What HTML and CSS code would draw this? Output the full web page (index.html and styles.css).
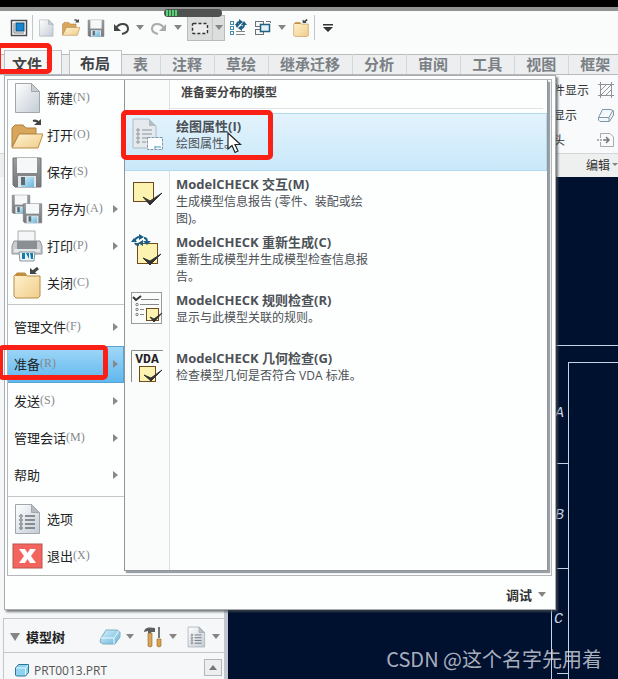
FILE: index.html
```html
<!DOCTYPE html>
<html lang="zh-CN">
<head>
    <meta charset="UTF-8">
    <meta name="viewport" content="width=device-width, initial-scale=1.0">
    <title>PRT0013</title>
    <link rel="stylesheet" href="styles.css">
</head>
<body>
    <!-- shared icons -->
    <svg class="defs" width="0" height="0">
        <defs>
            <linearGradient id="paper" x1="0" y1="0" x2="1" y2="1">
                <stop offset="0" stop-color="#ffffff"/>
                <stop offset="1" stop-color="#c3ccd5"/>
            </linearGradient>
            <linearGradient id="gold" x1="0" y1="0" x2="1" y2="1">
                <stop offset="0" stop-color="#fff3cf"/>
                <stop offset="1" stop-color="#f0cd8c"/>
            </linearGradient>
            <linearGradient id="steel" x1="0" y1="0" x2="0" y2="1">
                <stop offset="0" stop-color="#9a9da0"/>
                <stop offset="1" stop-color="#74787b"/>
            </linearGradient>
            <linearGradient id="blue" x1="0" y1="0" x2="1" y2="1">
                <stop offset="0" stop-color="#d5f1fb"/>
                <stop offset="1" stop-color="#69b6dc"/>
            </linearGradient>
        </defs>
        <symbol id="i-new" viewBox="0 0 32 32">
            <path d="M4.500 1.500H20.500L28.500 9.500V30.500H4.500Z" fill="url(#paper)" stroke="#a1a7ad"/>
            <path d="M20.500 1.500V9.500H28.500Z" fill="#c9ced2" stroke="#a1a7ad"/>
        </symbol>
        <symbol id="i-open" viewBox="0 0 32 32">
            <path d="M1 28V9L4 6H12L15 9H25V15H8Z" fill="#d9a75b" stroke="#ad7f3d"/>
            <path d="M1 29L8 15H32L27 29Z" fill="url(#gold)" stroke="#b78b45"/>
            <path d="M22 2C25 1 27 2 28 5" fill="none" stroke="#444" stroke-width="2"/>
            <path d="M23 6H30V0Z" fill="#444"/>
        </symbol>
        <symbol id="i-save" viewBox="0 0 32 32">
            <path d="M2 2H30V31H4L2 29Z" fill="url(#steel)" stroke="#6f7376"/>
            <rect x="6" y="2" width="20" height="15" fill="#f5f7f8"/>
            <rect x="7" y="20" width="18" height="11" fill="#e2e6ea"/>
            <rect x="10" y="21" width="13" height="10" fill="url(#blue)"/>
            <rect x="10" y="21" width="4" height="8" fill="#5d6a74"/>
        </symbol>
        <symbol id="i-save-as" viewBox="0 0 32 32">
            <use href="#i-save" x="0" y="0" width="20" height="22"/>
            <use href="#i-save" x="11" y="9" width="21" height="22"/>
        </symbol>
        <symbol id="i-print" viewBox="0 0 32 32">
            <path d="M7 1H24V13H7Z" fill="#f4f6f7" stroke="#a9adb0"/>
            <path d="M3 11H29L31 16V24H1V16Z" fill="#c9cdd0" stroke="#8e9396"/>
            <rect x="6" y="11" width="20" height="8" fill="#8a8f93"/>
            <rect x="3" y="19" width="26" height="3" fill="#e5e8ea"/>
            <path d="M8 22H24L23 31H9Z" fill="#e8f6fb" stroke="#8e9396"/>
            <path d="M11 23H14V29H11ZM15 23L18 29V23ZM19 23H22V29H20Z" fill="#167bab"/>
        </symbol>
        <symbol id="i-close" viewBox="0 0 32 32">
            <path d="M3 29V9L6 6H14L16 9H29V29L27 31H5Z" fill="url(#gold)" stroke="#b78b45"/>
            <path d="M4 9L6 6H14L16 9Z" fill="#c18d40"/>
            <path d="M27 1L22 5" fill="none" stroke="#444" stroke-width="3"/>
            <path d="M19 1V7H26Z" fill="#444"/>
        </symbol>
        <symbol id="i-list" viewBox="0 0 32 32">
            <path d="M4.500 1.500H20.500L28.500 9.500V30.500H4.500Z" fill="url(#paper)" stroke="#a1a7ad"/>
            <path d="M20.500 1.500V9.500H28.500Z" fill="#b5bbc0" stroke="#a1a7ad"/>
            <path d="M14 13H24M14 17H24M14 21H24M14 25H24" stroke="#6b7075" stroke-width="1.300"/>
            <g fill="none" stroke="#6b7075">
                <circle cx="10" cy="13" r="1.300"/><circle cx="10" cy="17" r="1.300"/><circle cx="10" cy="21" r="1.300"/><circle cx="10" cy="25" r="1.300"/>
            </g>
        </symbol>
        <symbol id="i-exit" viewBox="0 0 32 32">
            <rect x="2" y="4" width="29" height="24" fill="#f4645f" stroke="#bb524d"/>
            <path d="M8 9H14L16.500 13L19 9H25L20 16L25 23H19L16.500 19L14 23H8L13 16Z" fill="#fff"/>
        </symbol>
        <symbol id="i-props" viewBox="0 0 32 32">
            <path d="M2 1H18L25 8V30H2Z" fill="#e4eaee" stroke="#b3bbc1"/>
            <path d="M18 1V8H25Z" fill="#b5bdc3"/>
            <path d="M11 12H21M11 16H21M11 20H16M11 24H15" stroke="#8b9196" stroke-width="1.200"/>
            <g fill="none" stroke="#8b9196"><circle cx="7" cy="12" r="1.200"/><circle cx="7" cy="16" r="1.200"/><circle cx="7" cy="20" r="1.200"/><circle cx="7" cy="24" r="1.200"/></g>
            <rect x="16.500" y="19.500" width="15" height="12" fill="#fbfdfe" stroke="#7d98a8" stroke-dasharray="3 1"/>
            <path d="M24 28V31M24 29H30" stroke="#4c9cc2"/>
        </symbol>
        <symbol id="i-check" viewBox="0 0 32 32">
            <rect x="2.500" y="6.500" width="20" height="19" fill="#fdf3b0" stroke="#6e4a1c"/>
            <path d="M12 21L19 25L31 17L19 29Z" fill="#333" stroke="#333"/>
        </symbol>
        <symbol id="i-recheck" viewBox="0 0 32 32">
            <rect x="6.500" y="9.500" width="20" height="20" fill="#fdf3b0" stroke="#6e4a1c"/>
            <path d="M12 24L19 27L30 20L19 31Z" fill="#333" stroke="#333"/>
            <path d="M3 8C4 4 6 3 9 3M8 11C7 11 5 11 4 9M13 4C15 4 16 5 16 8" fill="none" stroke="#1b5e86" stroke-width="2"/>
            <path d="M8 0L13 3L8 6ZM0 8H6L3 4ZM12 6V12L7 9ZM12 7H20L16 11Z" fill="#1b5e86"/>
        </symbol>
        <symbol id="i-rules" viewBox="0 0 32 32">
            <rect x="0.500" y="0.500" width="30" height="31" fill="#fafbfb" stroke="#9a9a9a"/>
            <path d="M2 5L5 8L10 4" fill="none" stroke="#333" stroke-width="2"/>
            <path d="M10 7.500H28M9 12.500H28M9 17.500H13M9 22.500H13" stroke="#888"/>
            <g fill="none" stroke="#777"><circle cx="6" cy="12.500" r="1.200"/><circle cx="6" cy="17.500" r="1.200"/><circle cx="6" cy="22.500" r="1.200"/></g>
            <rect x="15.500" y="16.500" width="12" height="12" fill="#fdf3b0" stroke="#6e4a1c"/>
            <path d="M19 25L23 27L31 21L23 30Z" fill="#333" stroke="#333"/>
        </symbol>
    </svg>

    <div class="app">
        <div class="titlebar"></div>

        <div class="toolbar">
            <button class="tool" aria-label="窗口">
                <svg width="18" height="18" viewBox="0 0 18 18"><rect x="1.500" y="1.500" width="15" height="15" fill="#fff" stroke="#454b50" stroke-width="1.500"/><path d="M4 4V14H14" fill="none" stroke="#777"/><rect x="6" y="4" width="8" height="8" fill="#1387cf" stroke="#134e78"/></svg>
            </button>
            <span class="tool-divider"></span>
            <button class="tool" aria-label="新建"><svg width="18" height="18"><use href="#i-new"/></svg></button>
            <button class="tool" aria-label="打开"><svg width="18" height="18"><use href="#i-open"/></svg></button>
            <button class="tool" aria-label="保存"><svg width="18" height="18"><use href="#i-save"/></svg></button>
            <button class="tool" aria-label="撤消">
                <svg width="18" height="18" viewBox="0 0 18 18"><path d="M4 9C8 3 16 4 16 10C16 12 14 14 10 15" fill="none" stroke="#444" stroke-width="2"/><path d="M2 5V12H9Z" fill="#444"/></svg>
            </button>
            <button class="tool-arrow" aria-label="撤消列表"><i class="caret"></i></button>
            <button class="tool" aria-label="重做">
                <svg width="18" height="18" viewBox="0 0 18 18"><path d="M14 9C10 3 2 4 2 10C2 12 4 14 8 15" fill="none" stroke="#aaa" stroke-width="2"/><path d="M16 5V12H9Z" fill="#aaa"/></svg>
            </button>
            <button class="tool-arrow" aria-label="重做列表"><i class="caret"></i></button>
            <div class="tool-split">
                <button class="tool" aria-label="选择">
                    <svg width="18" height="18" viewBox="0 0 18 18"><rect x="1.500" y="4.500" width="15" height="10" rx="1" fill="#ececec" stroke="#333" stroke-width="1.400" stroke-dasharray="3 2"/></svg>
                </button>
                <button class="tool-arrow" aria-label="选择列表"><i class="caret"></i></button>
            </div>
            <button class="tool" aria-label="重新生成">
                <svg width="18" height="18" viewBox="0 0 18 18"><g fill="none" stroke="#4c88a8"><rect x="1.500" y="2.500" width="3" height="3"/><rect x="1.500" y="7.500" width="3" height="3"/><rect x="1.500" y="12.500" width="3" height="3"/></g><path d="M7 12.500H16M7 15.500H16" stroke="#888"/><path d="M8 6C8 3 10 3 11 3M15 5C15 9 13 9 12 9" fill="none" stroke="#1b5e86" stroke-width="2"/><path d="M10 0L14 3L10 6ZM6 5H11L8 9ZM13 6V12L9 9ZM12 6L15 2L18 6Z" fill="#1b5e86"/></svg>
            </button>
            <button class="tool" aria-label="窗口列表">
                <svg width="18" height="18" viewBox="0 0 18 18"><g fill="#f6f8f9" stroke="#6c7378"><rect x="1.500" y="2.500" width="8" height="5"/><rect x="1.500" y="10.500" width="8" height="5"/></g><rect x="6.500" y="5.500" width="9" height="7" fill="#dff1f9" stroke="#245f80" stroke-width="1.500"/><path d="M12 2.500H16.500V4" fill="none" stroke="#6c7378"/></svg>
            </button>
            <button class="tool-arrow" aria-label="更多窗口"><i class="caret"></i></button>
            <button class="tool" aria-label="关闭"><svg width="18" height="18"><use href="#i-close"/></svg></button>
            <span class="tool-divider"></span>
            <button class="tool" aria-label="自定义">
                <svg width="10" height="8" viewBox="0 0 10 8"><path d="M0 0H10V1.500H0ZM0 3H10L5 8Z" fill="#333"/></svg>
            </button>
        </div>

        <nav class="tabs">
            <button class="tab-file">文件<i class="caret small"></i></button>
            <button class="tab active">布局</button>
            <button class="tab">表</button>
            <button class="tab">注释</button>
            <button class="tab">草绘</button>
            <button class="tab">继承迁移</button>
            <button class="tab">分析</button>
            <button class="tab">审阅</button>
            <button class="tab">工具</button>
            <button class="tab">视图</button>
            <button class="tab">框架</button>
        </nav>

        <section class="ribbon">
            <div class="ribbon-body">
                <div class="ribbon-row"><span>件显示</span>
                    <svg width="18" height="18" viewBox="0 0 18 18"><path d="M3.500 1V17M14.500 1V17M1 3.500H17M1 14.500H17M4 9L9 4M4 14L14 4M9 14L14 9" fill="none" stroke="#8f9498"/></svg>
                </div>
                <div class="ribbon-row"><span>显示</span>
                    <svg width="18" height="18" viewBox="0 0 18 18"><path d="M1.500 11.500L5.500 3.500H14L16.500 5V9L12.500 15.500H3L1.500 14ZM1.500 11.500H12L16 4M12 11.500V15" fill="#f0f6f9" stroke="#7f97a6"/></svg>
                </div>
                <div class="ribbon-row"><span>头</span>
                    <svg width="18" height="18" viewBox="0 0 18 18"><path d="M3.500 7V2.500H13L16.500 6V15.500H3.500V11" fill="none" stroke="#aaa"/><path d="M0 9H8" stroke="#666" stroke-dasharray="2 1"/><path d="M7 9H12M9 6L12 9L9 12" fill="none" stroke="#777" stroke-width="1.500"/></svg>
                </div>
            </div>
            <div class="ribbon-label">编辑<i class="caret small"></i></div>
        </section>

        <main class="workspace">
            <aside class="model-tree">
                <header class="tree-header">
                    <i class="caret big"></i>
                    <h2>模型树</h2>
                    <div class="tree-tools">
                        <button aria-label="显示">
                            <svg width="22" height="20" viewBox="0 0 22 20"><path d="M2 11L7 3H18L21 5V10L16 17H4L1 15Z" fill="url(#blue)" stroke="#7faec4"/><path d="M2 11H15L20 4M15 11V17" fill="none" stroke="#eefaff"/></svg>
                            <i class="caret"></i>
                        </button>
                        <button aria-label="设置">
                            <svg width="22" height="22" viewBox="0 0 22 22"><path d="M2 6C3 1 7 1 13 2V6H9V8H6V5Z" fill="#5b5f62"/><path d="M6 7H10V20Q8 22 6 20Z" fill="#d9a558" stroke="#8d6228" stroke-width="0.600"/><path d="M17 1V12" stroke="#777" stroke-width="2"/><path d="M15 13H19V20Q17 22 15 20Z" fill="#dda348" stroke="#8d6228" stroke-width="0.600"/></svg>
                            <i class="caret"></i>
                        </button>
                        <button aria-label="列表">
                            <svg width="22" height="22"><use href="#i-list"/></svg>
                            <i class="caret"></i>
                        </button>
                    </div>
                </header>
                <div class="tree-list">
                    <svg width="16" height="16" viewBox="0 0 16 16"><path d="M1.500 6L4.500 2.500H14.500V10.500L11.500 14H2.500L1.500 13Z" fill="#8fd3f0" stroke="#2b7598"/><path d="M2 6H11.500V13M11.500 6L14 3" fill="none" stroke="#dff5ff"/></svg>
                    <span>PRT0013.PRT</span>
                    <button class="scroll-up" aria-label="向上"><i class="caret up"></i></button>
                </div>
            </aside>

            <section class="canvas">
                <svg class="sheet" width="100%" height="100%">
                    <g stroke="#c5d3e6" fill="none">
                        <line x1="324" y1="168.500" x2="100%" y2="168.500"/>
                        <line x1="323.500" y1="168" x2="323.500" y2="100%"/>
                        <line x1="340" y1="185.500" x2="100%" y2="185.500"/>
                        <line x1="340.500" y1="185" x2="340.500" y2="100%"/>
                        <line x1="329" y1="286.500" x2="340" y2="286.500"/>
                        <line x1="329" y1="391.500" x2="340" y2="391.500"/>
                        <line x1="329" y1="496.500" x2="340" y2="496.500"/>
                    </g>
                    <g class="zone">
                        <text x="327" y="240">A</text>
                        <text x="327" y="342">B</text>
                        <text x="326" y="446">C</text>
                    </g>
                </svg>
            </section>
        </main>
    </div>

    <div class="progress"><i></i></div>

    <div class="file-menu">
        <div class="menu-body">
            <div class="menu-list">
                <button class="menu-item"><svg width="32" height="32"><use href="#i-new"/></svg>新建<kbd>(N)</kbd></button>
                <button class="menu-item"><svg width="32" height="32"><use href="#i-open"/></svg>打开<kbd>(O)</kbd></button>
                <button class="menu-item"><svg width="32" height="32"><use href="#i-save"/></svg>保存<kbd>(S)</kbd></button>
                <button class="menu-item more"><svg width="32" height="32"><use href="#i-save-as"/></svg>另存为<kbd>(A)</kbd></button>
                <button class="menu-item more"><svg width="32" height="32"><use href="#i-print"/></svg>打印<kbd>(P)</kbd></button>
                <button class="menu-item"><svg width="32" height="32"><use href="#i-close"/></svg>关闭<kbd>(C)</kbd></button>
                <hr>
                <button class="menu-item plain more">管理文件<kbd>(F)</kbd></button>
                <button class="menu-item plain more selected">准备<kbd>(R)</kbd></button>
                <button class="menu-item plain more">发送<kbd>(S)</kbd></button>
                <button class="menu-item plain more">管理会话<kbd>(M)</kbd></button>
                <button class="menu-item plain more">帮助</button>
                <hr>
                <button class="menu-item"><svg width="32" height="32"><use href="#i-list"/></svg>选项</button>
                <button class="menu-item"><svg width="32" height="32"><use href="#i-exit"/></svg>退出<kbd>(X)</kbd></button>
            </div>

            <div class="submenu">
                <h3>准备要分布的模型</h3>
                <button class="entry hover">
                    <svg width="32" height="32"><use href="#i-props"/></svg>
                    <span class="entry-text"><b>绘图属性(I)</b><span>绘图属性。</span></span>
                </button>
                <button class="entry">
                    <svg width="32" height="32"><use href="#i-check"/></svg>
                    <span class="entry-text"><b>ModelCHECK 交互(M)</b><span>生成模型信息报告 (零件、装配或绘图)。</span></span>
                </button>
                <button class="entry">
                    <svg width="32" height="32"><use href="#i-recheck"/></svg>
                    <span class="entry-text"><b>ModelCHECK 重新生成(C)</b><span>重新生成模型并生成模型检查信息报告。</span></span>
                </button>
                <button class="entry">
                    <svg width="32" height="32"><use href="#i-rules"/></svg>
                    <span class="entry-text"><b>ModelCHECK 规则检查(R)</b><span>显示与此模型关联的规则。</span></span>
                </button>
                <button class="entry">
                    <svg width="32" height="32" viewBox="0 0 32 32">
                        <path d="M0.500 32V0.500H32" fill="none" stroke="#8b8b8b"/>
                        <text x="16" y="13" text-anchor="middle" class="vda-text">VDA</text>
                        <rect x="8.500" y="16.500" width="16" height="15" fill="#fdf3b0" stroke="#6e4a1c"/>
                        <path d="M13 25L20 28L31 20L20 31Z" fill="#333" stroke="#333"/>
                    </svg>
                    <span class="entry-text"><b>ModelCHECK 几何检查(G)</b><span>检查模型几何是否符合 VDA 标准。</span></span>
                </button>
            </div>
        </div>
        <div class="menu-footer">
            <button>调试<i class="caret"></i></button>
        </div>
    </div>

    <div class="mark mark-file"></div>
    <div class="mark mark-entry"></div>
    <div class="mark mark-prepare"></div>
    <svg class="cursor" width="15" height="22" viewBox="0 0 15 22"><path d="M1 1V17L5 13.500L8 20.500L11 19L8 12.500H13.500Z" fill="#fff" stroke="#222" stroke-width="1.200"/></svg>
    <div class="watermark">CSDN @这个名字先用着</div>
</body>
</html>
```

FILE: styles.css
```css
* {
    box-sizing: border-box;
}

body {
    margin: 0;
    position: relative;
    height: 100vh;
    overflow: hidden;
    font-family: "Open Sans", "Noto Sans CJK SC", sans-serif;
    font-size: 12px;
    color: #333;
    background: #fafcfc;
}

button {
    margin: 0;
    padding: 0;
    border: none;
    background: none;
    font: inherit;
    color: inherit;
    text-align: left;
}

svg {
    display: block;
    flex-shrink: 0;
}

.defs {
    position: absolute;
}

.app {
    display: flex;
    flex-direction: column;
    height: 100%;
}

.caret {
    border: 4px solid transparent;
    border-top: 5px solid #858585;
    border-bottom: 0;
}

.caret.small {
    border-width: 3px 3px 0;
}

.caret.big {
    border-width: 8px 5px 0;
}

.caret.up {
    border-width: 0 4px 5px;
    border-bottom: 5px solid #777;
}

.titlebar {
    flex-shrink: 0;
    height: 11px;
    background: #000;
    border-bottom: 4px solid #929292;
}

/* quick access toolbar */

.toolbar {
    display: flex;
    flex-shrink: 0;
    align-items: center;
    gap: 1px;
    height: 39px;
    padding: 0 7px 6px;
}

.tool,
.tool-arrow {
    display: flex;
    align-items: center;
    justify-content: center;
    width: 24px;
    height: 24px;
}

.tool-arrow {
    width: 12px;
}

.tool-divider {
    width: 1px;
    height: 25px;
    background: #c4c7c8;
}

.tool-split {
    display: flex;
    margin-left: 2px;
    background: #dcdddd;
    border: 1px solid #b9bbbc;
}

.tool-split .tool-arrow {
    border-left: 1px solid #c2c4c5;
}

.progress {
    position: absolute;
    top: 9px;
    left: 164px;
    width: 58px;
    height: 8px;
    padding: 1px 2px;
    border-radius: 4px;
    background: #505252;
}

.progress i {
    display: block;
    width: 12px;
    height: 6px;
    background: repeating-linear-gradient(90deg, #5fce7a 0, #5fce7a 2px, #2f6b3e 2px, #2f6b3e 3px);
}

/* ribbon tabs */

.tabs {
    display: flex;
    flex-shrink: 0;
    align-items: flex-end;
    height: 25px;
    padding-left: 4px;
    border-bottom: 1px solid #b6b9bb;
    background: linear-gradient(#fafcfc 4px, #b9bcbe 4px, #b9bcbe 5px, #eceeef 5px);
}

.tab,
.tab-file {
    flex-shrink: 0;
    height: 20px;
    padding: 0 12px 0 11px;
    border-right: 1px solid #d5d7d8;
    font-size: 15px;
    line-height: 20px;
    font-weight: bold;
    color: #7a8085;
}

.tab-file {
    display: flex;
    align-items: center;
    gap: 4px;
    height: 24px;
    margin-right: 7px;
    padding: 2px 9px 0 7px;
    border: 1px solid #c0c3c5;
    border-bottom: none;
    color: #444;
    background: #f6f8f8;
}

.tab.active {
    height: 24px;
    padding: 0 11px 0 10px;
    line-height: 24px;
    border: 1px solid #c0c3c5;
    border-bottom: none;
    color: #3f4347;
    background: #fafcfc;
}

/* ribbon group */

.ribbon {
    flex-shrink: 0;
    background: #f8fafb;
}

.ribbon-body {
    display: flex;
    flex-direction: column;
    align-items: flex-end;
    height: 78px;
    padding: 2px 3px 0 0;
}

.ribbon-row {
    display: flex;
    align-items: center;
    gap: 8px;
    height: 25px;
}

.ribbon-row span {
    width: 36px;
}

.ribbon-label {
    display: flex;
    align-items: center;
    justify-content: flex-end;
    gap: 2px;
    height: 24px;
    padding-bottom: 2px;
    border-top: 1px solid #d3d5d6;
    background: #eeefef;
}

/* model tree and drawing area */

.workspace {
    display: flex;
    flex: 1;
    min-height: 0;
}

.model-tree {
    display: flex;
    flex-direction: column;
    justify-content: flex-end;
    width: 228px;
    padding-left: 3px;
    border-right: 4px solid #c3c8d0;
    background: #f5f7f8;
}

.tree-header {
    display: flex;
    align-items: center;
    height: 35px;
    padding: 2px 4px 0 6px;
    border: 1px solid #c4c7c9;
    border-right: none;
}

.tree-header h2 {
    margin: 0 auto 0 6px;
    font-size: 13px;
    color: #222;
}

.tree-tools {
    display: flex;
    gap: 8px;
}

.tree-tools button {
    display: flex;
    align-items: center;
    gap: 5px;
}

.tree-list {
    display: flex;
    align-items: flex-start;
    gap: 4px;
    height: 26px;
    padding: 9px 2px 0 10px;
    border-left: 1px solid #c4c7c9;
    line-height: 18px;
    color: #555;
}

.scroll-up {
    display: flex;
    align-items: center;
    justify-content: center;
    width: 18px;
    height: 17px;
    margin: -3px 0 0 auto;
    border: 1px solid #b4b7b9;
    background: #eceeef;
}

.canvas {
    flex: 1;
    min-width: 0;
    overflow: hidden;
    background: #00102f;
}

.zone {
    font: italic 15px "Liberation Mono", monospace;
    fill: #c5d3e6;
}

/* file menu */

.file-menu {
    position: absolute;
    top: 75px;
    left: 4px;
    right: 62px;
    padding: 3px 3px 0 2px;
    border: 1px solid #a9adb0;
    background: #fdfefe;
    box-shadow: 2px 2px 2px rgba(70, 75, 80, 0.7);
}

.menu-body {
    display: grid;
    grid-template-columns: 116px 1fr;
    border: 1px solid #b4b7ba;
}

.menu-list {
    display: flex;
    flex-direction: column;
}

.menu-list hr {
    width: 100%;
    margin: 2px 0 4px;
    border: none;
    border-top: 1px solid #c4c7c9;
}

.menu-item {
    display: flex;
    align-items: center;
    height: 37px;
    padding: 0 6px 2px 3px;
    font-size: 13px;
    color: #222;
}

.menu-item svg {
    margin-right: 4px;
}

.menu-item kbd {
    font: 12px "Liberation Serif", serif;
    color: #85898d;
}

.menu-item.plain {
    padding-left: 6px;
}

.menu-item.more::after {
    content: "";
    margin-left: auto;
    border: 4px solid transparent;
    border-left: 5px solid #85898c;
    border-right: 0;
}

.menu-item.selected {
    background: linear-gradient(#a0d7f8, #5fb8ee);
    border: 1px solid #58a5d3;
    border-left: none;
    padding-right: 5px;
}

.submenu {
    margin: 0 3px 4px 0;
    border: 1px solid #8f969a;
    border-top: none;
    background: linear-gradient(90deg, #fafcfc 44px, #dcdfe1 44px, #dcdfe1 45px, #fdfefe 45px);
    box-shadow: 2px 2px 1px #9aa1a5;
}

.submenu h3 {
    height: 29px;
    margin: 0 4px 4px 45px;
    padding-left: 11px;
    border-bottom: 1px solid #e0e2e3;
    font-size: 12px;
    line-height: 25px;
    color: #444;
}

.entry {
    display: flex;
    align-items: flex-start;
    width: 100%;
    height: 58px;
    padding: 5px 0 0 6px;
    line-height: 17px;
    color: #4c5156;
}

.entry b {
    font-size: 13px;
}

.entry.hover {
    background: linear-gradient(#e3f3fc, #c9e8fa);
    border: 1px solid #b3daee;
    border-left: none;
    padding-top: 4px;
}

.entry-text {
    display: flex;
    flex-direction: column;
    width: 200px;
    margin-left: 13px;
}

.vda-text {
    font: bold 13px "Liberation Mono", monospace;
    fill: #222;
}

.menu-footer {
    display: flex;
    align-items: center;
    justify-content: flex-end;
    height: 33px;
    padding: 4px 6px 0 0;
}

.menu-footer button {
    display: flex;
    align-items: center;
    gap: 6px;
    font-size: 13px;
    font-weight: bold;
}

/* annotations */

.mark {
    position: absolute;
    border: 5px solid #fb2016;
    border-radius: 5px;
}

.mark-file {
    top: 43px;
    left: -4px;
    width: 56px;
    height: 31px;
}

.mark-entry {
    top: 110px;
    left: 121px;
    width: 152px;
    height: 50px;
}

.mark-prepare {
    top: 345px;
    left: -2px;
    width: 110px;
    height: 35px;
}

.cursor {
    position: absolute;
    top: 132px;
    left: 227px;
}

.watermark {
    position: absolute;
    right: 16px;
    bottom: 6px;
    font: 20px "Noto Sans CJK SC", sans-serif;
    color: rgba(215, 218, 224, 0.8);
}
```
